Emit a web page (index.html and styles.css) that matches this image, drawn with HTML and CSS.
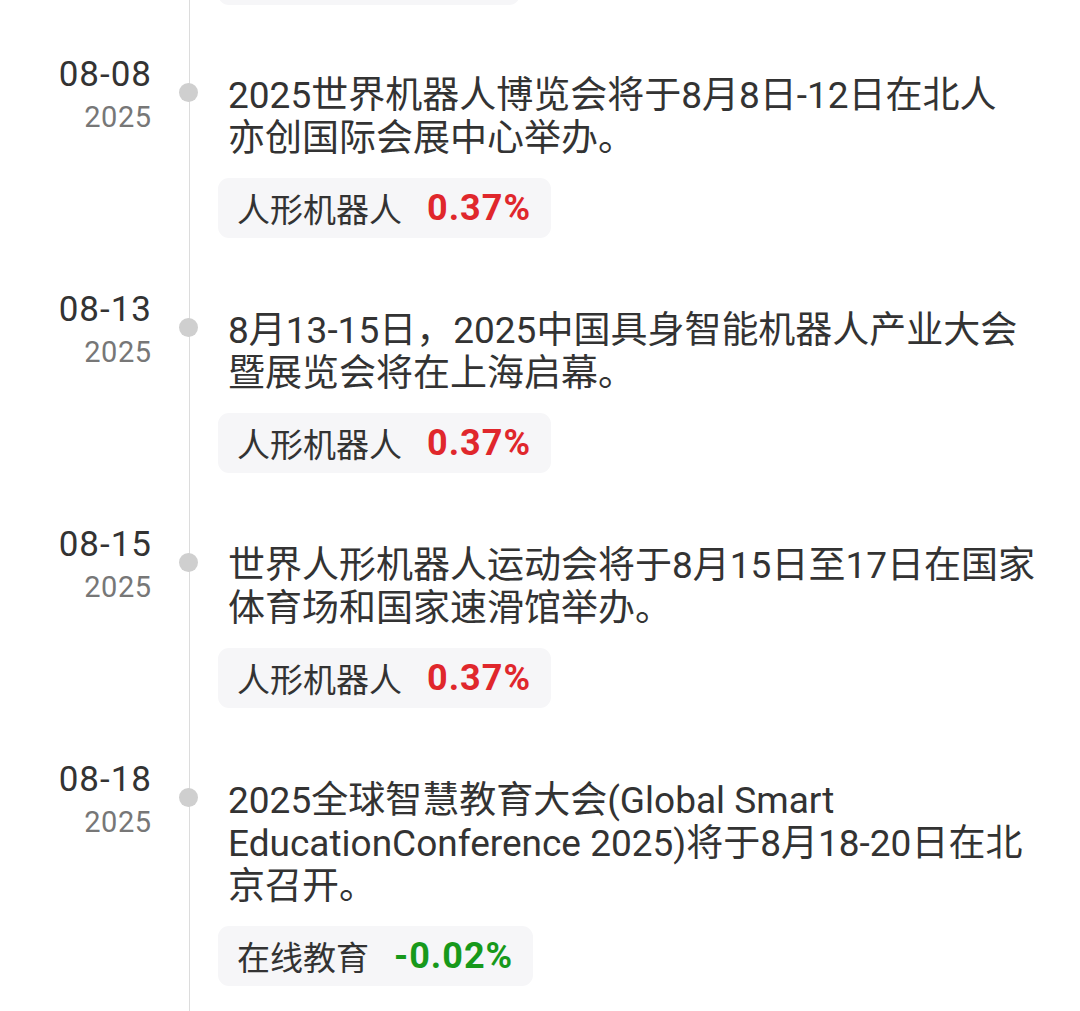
FILE: index.html
```html
<!DOCTYPE html>
<html lang="zh-CN">
<head>
<meta charset="utf-8">
<title>Timeline</title>
<link rel="stylesheet" href="styles.css">
</head>
<body>
<div class="timeline">
  <div class="stub-row"><div class="tag stub"></div></div>

  <div class="item">
    <div class="date"><div class="md">08-08</div><div class="yr">2025</div></div>
    <div class="axis"><span class="dot"></span></div>
    <div class="content">
      <p class="title">2025世界机器人博览会将于8月8日-12日在北人<br>亦创国际会展中心举办。</p>
      <div class="tag"><span class="name">人形机器人</span><span class="pct up">0.37%</span></div>
    </div>
  </div>

  <div class="item">
    <div class="date"><div class="md">08-13</div><div class="yr">2025</div></div>
    <div class="axis"><span class="dot"></span></div>
    <div class="content">
      <p class="title">8月13-15日，2025中国具身智能机器人产业大会<br>暨展览会将在上海启幕。</p>
      <div class="tag"><span class="name">人形机器人</span><span class="pct up">0.37%</span></div>
    </div>
  </div>

  <div class="item">
    <div class="date"><div class="md">08-15</div><div class="yr">2025</div></div>
    <div class="axis"><span class="dot"></span></div>
    <div class="content">
      <p class="title">世界人形机器人运动会将于8月15日至17日在国家<br>体育场和国家速滑馆举办。</p>
      <div class="tag"><span class="name">人形机器人</span><span class="pct up">0.37%</span></div>
    </div>
  </div>

  <div class="item">
    <div class="date"><div class="md">08-18</div><div class="yr">2025</div></div>
    <div class="axis"><span class="dot"></span></div>
    <div class="content">
      <p class="title">2025全球智慧教育大会(Global Smart<br>EducationConference 2025)将于8月18-20日在北<br>京召开。</p>
      <div class="tag"><span class="name">在线教育</span><span class="pct down">-0.02%</span></div>
    </div>
  </div>
</div>
</body>
</html>
```

FILE: styles.css
```css
html, body {
  margin: 0;
  padding: 0;
  background: #ffffff;
}

body {
  font-family: Roboto, "Noto Sans CJK SC", sans-serif;
  color: #333333;
  width: 1080px;
  height: 1011px;
  overflow: hidden;
}

.timeline {
  background: linear-gradient(#dcdcdc, #dcdcdc) no-repeat 189px 0 / 1px 100%;
  min-height: 1011px;
}

.stub-row {
  padding-left: 218px;
  margin-top: -55px;
  margin-bottom: 69px;
}

.stub {
  width: 302px;
}

.item {
  display: grid;
  grid-template-columns: 152px 76px 1fr;
  padding-bottom: 71px;
}

.date {
  text-align: right;
  padding-right: 1px;
  margin-top: -19px;
}

.md {
  font-size: 35px;
  line-height: 40px;
  letter-spacing: 1px;
  margin-right: -1px;
  color: #333333;
}

.yr {
  font-size: 29px;
  line-height: 40px;
  letter-spacing: 0.5px;
  margin-right: -0.5px;
  color: #777777;
  margin-top: 2px;
}

.axis {
  position: relative;
}

.dot {
  display: block;
  width: 19px;
  height: 19px;
  border-radius: 50%;
  background: #cfcfcf;
  margin-left: 27px;
  margin-top: 9px;
}

.content {
  min-width: 0;
}

.title {
  margin: 0;
  font-size: 37px;
  line-height: 43px;
  color: #333333;
  white-space: nowrap;
}

.tag {
  display: inline-flex;
  align-items: center;
  height: 60px;
  margin-top: 18px;
  margin-left: -10px;
  padding: 0 21px 0 19px;
  background: #f6f6f8;
  border-radius: 11px;
  gap: 25px;
}

.tag.stub {
  display: block;
  margin: 0;
  padding: 0;
}

.name {
  font-size: 33px;
  color: #333333;
}

.pct {
  font-size: 36px;
  font-weight: 700;
  letter-spacing: 1px;
  margin-right: -1px;
}

.pct.up {
  color: #e0272c;
}

.pct.down {
  color: #17991b;
}
```
